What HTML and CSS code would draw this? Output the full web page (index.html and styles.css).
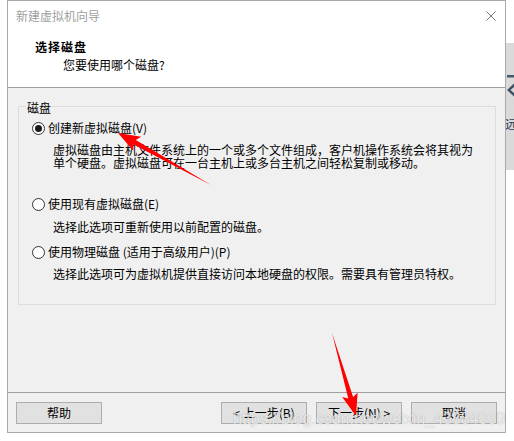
FILE: index.html
```html
<!DOCTYPE html>
<html lang="zh-CN">
<head>
<meta charset="utf-8">
<title>新建虚拟机向导</title>
<link rel="stylesheet" href="styles.css">
</head>
<body>
<div class="screen">
  <div class="dialog">
    <div class="header">
      <div class="titlebar">
        <span class="title">新建虚拟机向导</span>
        <svg class="close" viewBox="0 0 10 10"><path d="M0.5 0.5 L9.5 9.5 M9.5 0.5 L0.5 9.5" stroke="#777" stroke-width="1" fill="none"/></svg>
      </div>
      <div class="heading">选择磁盘</div>
      <div class="subheading">您要使用哪个磁盘?</div>
    </div>
    <div class="body">
      <fieldset class="group">
        <legend>磁盘</legend>
        <div class="opt-row first"><span class="radio checked"></span><span>创建新虚拟磁盘(V)</span></div>
        <p class="desc">虚拟磁盘由主机文件系统上的一个或多个文件组成，客户机操作系统会将其视为<br>单个硬盘。虚拟磁盘可在一台主机上或多台主机之间轻松复制或移动。</p>
        <div class="opt-row second"><span class="radio"></span><span>使用现有虚拟磁盘(E)</span></div>
        <p class="desc d2">选择此选项可重新使用以前配置的磁盘。</p>
        <div class="opt-row third"><span class="radio"></span><span>使用物理磁盘 (适用于高级用户)(P)</span></div>
        <p class="desc">选择此选项可为虚拟机提供直接访问本地硬盘的权限。需要具有管理员特权。</p>
      </fieldset>
    </div>
    <div class="footer">
      <button class="btn">帮助</button>
      <div class="nav">
        <button class="btn">&lt; 上一步(B)</button>
        <button class="btn">下一步(N) &gt;</button>
        <button class="btn">取消</button>
      </div>
    </div>
  </div>
  <div class="side">
    <div class="side-panel">
      <svg class="side-icons" viewBox="0 0 8 60">
        <rect x="1" y="32" width="7" height="2.5" fill="#44586a"/>
        <polygon points="1,47 8,40.5 8,44 4.5,47 8,50 8,53.5" fill="#3f5366"/>
      </svg>
      <span class="side-text">远</span>
    </div>
  </div>
  <svg class="annot" viewBox="0 0 514 441">
    <polygon points="118,133 141.1,136.7 135.8,140.1 211,185 133.4,144.5 133.3,150.7" fill="#ff0000"/>
    <polygon points="356,416 357.6,392.7 353.1,397 332,333 348.3,398.4 342.2,397.1" fill="#ff0000"/>
  </svg>
  <div class="watermark">https://blog.csdn.net/weixin_43884039</div>
</div>
</body>
</html>
```

FILE: styles.css
```css
html, body {
  margin: 0;
  background: #ffffff;
}

body {
  font-family: "Noto Sans CJK SC", "Noto Sans", sans-serif;
  font-size: 12px;
  color: #000;
}

.screen {
  position: relative;
  width: 514px;
  height: 441px;
  box-sizing: border-box;
  padding-left: 7px;
  display: flex;
  align-items: flex-start;
  overflow: hidden;
}

.dialog {
  width: 499px;
  height: 433px;
  box-sizing: border-box;
  border: 1px solid #aaaaaa;
  background: #f0f0f0;
  display: flex;
  flex-direction: column;
  flex-shrink: 0;
}

.header {
  height: 87px;
  box-sizing: border-box;
  background: #ffffff;
  border-bottom: 1px solid #a0a0a0;
}

.titlebar {
  height: 29px;
  display: flex;
  align-items: center;
  justify-content: space-between;
  padding: 0 9px 0 8px;
}

.title {
  color: #a0a0a0;
  line-height: 14px;
}

.close {
  width: 10px;
  height: 10px;
  display: block;
}

.heading {
  margin-top: 10px;
  padding-left: 27px;
  font-weight: bold;
  letter-spacing: 1px;
  line-height: 14px;
}

.subheading {
  margin-top: 4px;
  padding-left: 55px;
  line-height: 14px;
}

.body {
  flex: 1;
  padding: 9px 9px 0 10px;
}

.group {
  margin: 0;
  padding: 0 0 24px 0;
  border: 1px solid #dcdcdc;
  min-width: 0;
}

.group legend {
  margin-left: 7px;
  padding: 4px 1px 0;
  line-height: 14px;
}

.opt-row {
  display: flex;
  align-items: center;
  gap: 3px;
  height: 14px;
  line-height: 14px;
  margin-left: 13px;
}

.opt-row.first { margin-top: 6px; }
.opt-row.second { margin-top: 28px; }
.opt-row.third { margin-top: 12px; }

.radio {
  width: 13px;
  height: 13px;
  box-sizing: border-box;
  border: 1px solid #333333;
  border-radius: 50%;
  background: #ffffff;
  display: flex;
  align-items: center;
  justify-content: center;
  flex-shrink: 0;
}

.radio.checked::after {
  content: "";
  width: 7px;
  height: 7px;
  border-radius: 50%;
  background: #1a1a1a;
}

.desc {
  margin: 8px 0 0 34px;
  line-height: 13px;
}

.desc.d2 { margin-top: 9px; }

.footer {
  height: 40px;
  box-sizing: border-box;
  border-top: 1px solid #a0a0a0;
  padding: 9px 8px 0;
  display: flex;
  justify-content: space-between;
  align-items: flex-start;
}

.nav {
  display: flex;
  gap: 9px;
}

.btn {
  width: 86px;
  height: 22px;
  box-sizing: border-box;
  border: 1px solid #adadad;
  background: #e1e1e1;
  font-family: inherit;
  font-size: 12px;
  line-height: 14px;
  color: #000;
  padding: 0;
  margin: 0;
}

.side {
  width: 8px;
  flex-shrink: 0;
}

.side-panel {
  margin-top: 43px;
  height: 127px;
  background: #dadada;
  overflow: hidden;
}

.side-icons {
  display: block;
  width: 8px;
  height: 60px;
}

.side-text {
  display: block;
  margin-top: 14px;
  margin-left: -1px;
  line-height: 14px;
  color: #2d3a55;
  white-space: nowrap;
}

.annot {
  position: absolute;
  left: 0;
  top: 0;
  width: 514px;
  height: 441px;
  pointer-events: none;
}

.watermark {
  position: absolute;
  left: 233px;
  top: 410px;
  font-family: "Liberation Sans", Arial, sans-serif;
  font-size: 16px;
  line-height: 18px;
  color: rgba(255, 255, 255, 0.8);
  text-shadow: 0 0 1px rgba(0, 0, 0, 0.35);
  white-space: nowrap;
  pointer-events: none;
}
```
